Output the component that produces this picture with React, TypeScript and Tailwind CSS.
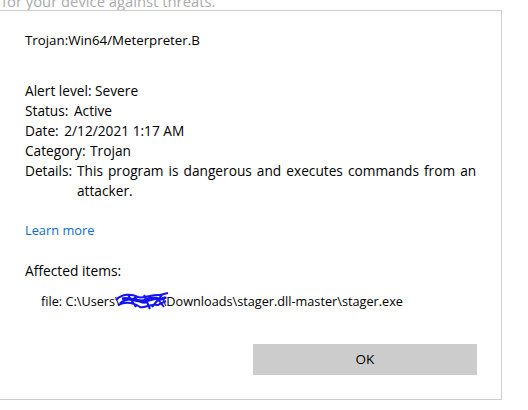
import React from "react";

export default function App() {
  return (
    <div
      className="relative w-[528px] h-[410px] overflow-hidden bg-white text-[#000000]"
      style={{ fontFamily: '"Open Sans", "Noto Sans", sans-serif' }}
    >
      <div className="h-[10px] overflow-hidden">
        <div className="mt-[-9px] ml-[2px] text-[14.8px] leading-[20px] text-[#aaaaaa] whitespace-nowrap">
          for your device against threats.
        </div>
      </div>
      <div className="ml-[-1px] w-[503px] h-[390px] border border-[#cccccc] flex flex-col pl-[25px] pr-[24px]">
        <div className="mt-[20px] text-[13.3px] leading-[18px]">Trojan:Win64/Meterpreter.B</div>
        <div className="mt-[32px] text-[13.7px] leading-[20px]">
          <div>Alert level: Severe</div>
          <div>
            <span className="mr-[2px]">Status:</span> Active
          </div>
          <div>
            <span className="mr-[2px]">Date:</span> 2/12/2021 1:17 AM
          </div>
          <div>
            <span className="mr-[1px]">Category:</span> Trojan
          </div>
          <div className="flex">
            <span className="whitespace-nowrap w-[52px] shrink-0">Details:</span>
            <span className="w-[412px] [word-spacing:1.5px]">This program is dangerous and executes commands from an attacker.</span>
          </div>
        </div>
        <div className="mt-[19px] text-[12.8px] leading-[20px] text-[#0a6cd0]">Learn more</div>
        <div className="mt-[21px] text-[13.8px] leading-[20px]">Affected items:</div>
        <div className="mt-[10px] ml-[16px] text-[12.7px] leading-[20px] whitespace-nowrap">
          file: C:\Users\
          <span className="relative inline-block w-[42px] text-[#1010ee] align-top">
            <span className="opacity-0">user</span>
            <svg
              className="absolute left-[-6px] top-[0px]"
              width="56"
              height="20"
              viewBox="0 0 56 20"
              fill="none"
              stroke="#1414f0"
              strokeWidth="2"
            >
              <path d="M2 9 C8 2 18 3 24 6 C30 8 38 3 46 4 L54 2 M6 12 C14 6 22 8 28 10 C34 12 40 6 48 8 M4 14 C12 10 20 12 26 16 C30 18 36 12 44 14 L52 10 M14 4 L22 16 M30 4 L36 18 M42 6 L50 16 M48 4 L38 16 M20 6 C24 10 30 14 34 10" />
              <path d="M8 8 C16 5 26 14 34 8 C40 4 46 12 52 6" strokeWidth="3" />
            </svg>
          </span>
          \Downloads\stager.dll-master\stager.exe
        </div>
        <div className="flex justify-end mt-[33px]">
          <button className="w-[224px] h-[31px] bg-[#cccccc] text-[13.5px] text-black">OK</button>
        </div>
      </div>
    </div>
  );
}
